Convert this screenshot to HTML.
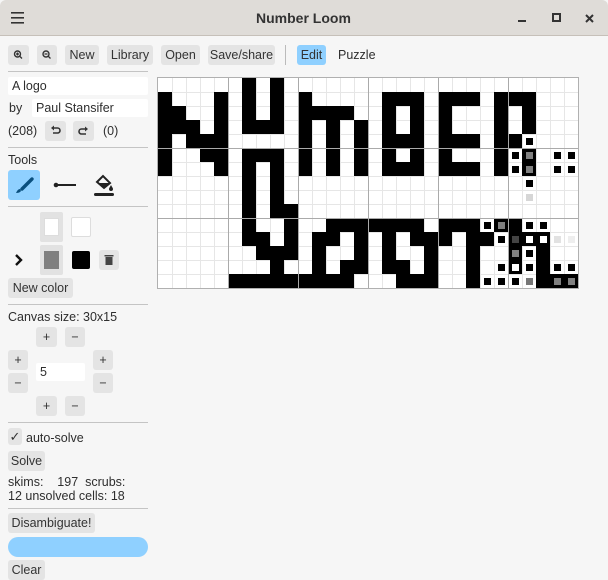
<!DOCTYPE html>
<html><head><meta charset="utf-8">
<style>
*{box-sizing:border-box;margin:0;padding:0}
body{width:608px;height:580px;overflow:hidden;background:#f6f6f6;font-family:"Liberation Sans","DejaVu Sans",sans-serif;font-size:12.5px;color:#2e2e2e;position:relative}
.a{position:absolute}
.tb{left:0;top:0;width:608px;height:36px;background:#dfdcd8;border-bottom:1px solid #c6c0b9;border-radius:6px 6px 0 0}
.btn{position:absolute;background:#e4e4e4;border-radius:3px;height:20px;line-height:20px;text-align:center;font-size:12.5px;color:#333}
.hr{position:absolute;left:8px;width:140px;height:1px;background:#c4c4c4}
.inp{position:absolute;background:#fff;height:18px;line-height:18px;padding-left:4px;border-radius:2px}
.t{position:absolute;white-space:nowrap}
</style></head><body>
<div class="a tb"></div>
<svg class="a" style="left:10px;top:11px" width="16" height="14"><rect x="1" y="1" width="13" height="1.6" fill="#333"/><rect x="1" y="6" width="13" height="1.6" fill="#333"/><rect x="1" y="11" width="13" height="1.6" fill="#333"/></svg>
<div class="t" style="left:256px;top:10px;font-weight:bold;font-size:14px;color:#333">Number Loom</div>
<svg class="a" style="left:515px;top:12px" width="60" height="14"><rect x="3" y="8" width="8" height="2" fill="#333"/><rect x="38" y="2" width="7" height="7" fill="none" stroke="#333" stroke-width="2"/></svg>
<svg class="a" style="left:584px;top:13px" width="12" height="12"><path d="M2 2L9 9M9 2L2 9" stroke="#333" stroke-width="2"/></svg>

<div class="btn" style="left:8px;top:45px;width:21px"><svg width="21" height="20"><circle cx="9.5" cy="9" r="3" fill="none" stroke="#333" stroke-width="1.4"/><path d="M8 9h3M9.5 7.5v3M11.5 11l2.5 2.5" stroke="#333" stroke-width="1.3"/></svg></div>
<div class="btn" style="left:37px;top:45px;width:20px"><svg width="20" height="20"><circle cx="9" cy="9" r="3" fill="none" stroke="#333" stroke-width="1.4"/><path d="M7.5 9h3M11 11l2.5 2.5" stroke="#333" stroke-width="1.3"/></svg></div>
<div class="btn" style="left:65px;top:45px;width:34px">New</div>
<div class="btn" style="left:107px;top:45px;width:46px">Library</div>
<div class="btn" style="left:161px;top:45px;width:39px">Open</div>
<div class="btn" style="left:208px;top:45px;width:67px">Save/share</div>
<div class="a" style="left:285px;top:45px;width:1px;height:20px;background:#bbb"></div>
<div class="btn" style="left:297px;top:45px;width:29px;background:#8fd0ff">Edit</div>
<div class="t" style="left:338px;top:48px">Puzzle</div>

<div class="hr" style="top:71px"></div>
<div class="inp" style="left:8px;top:77px;width:140px">A logo</div>
<div class="t" style="left:9px;top:101px">by</div>
<div class="inp" style="left:32px;top:99px;width:116px">Paul Stansifer</div>
<div class="t" style="left:8px;top:124px">(208)</div>
<div class="btn" style="left:45px;top:121px;width:21px"><svg width="21" height="20"><path d="M8 7h4.5a2.5 2.5 0 0 1 0 5H8" fill="none" stroke="#333" stroke-width="1.6"/><path d="M6 7l3-2.5v5z" fill="#333"/></svg></div>
<div class="btn" style="left:73px;top:121px;width:21px"><svg width="21" height="20"><path d="M13 8H8.5a2.5 2.5 0 0 0 0 5H13" fill="none" stroke="#333" stroke-width="1.6"/><path d="M15 8l-3-2.5v5z" fill="#333"/></svg></div>
<div class="t" style="left:103px;top:124px">(0)</div>
<div class="hr" style="top:147px"></div>

<div class="t" style="left:8px;top:153px">Tools</div>
<div class="a" style="left:8px;top:170px;width:32px;height:30px;background:#8fd0ff;border-radius:3px"></div>
<svg class="a" style="left:8px;top:170px" width="32" height="30"><path d="M14 19L24 9" stroke="#0a4f7e" stroke-width="3.4" stroke-linecap="round"/><path d="M12 19c-2 0-3 2-4 4 2 0 4-.5 5-2z" fill="#0a4f7e"/></svg>
<svg class="a" style="left:52px;top:176px" width="26" height="18"><circle cx="4" cy="9" r="2.3" fill="#222"/><rect x="4" y="8" width="20" height="2" fill="#222"/></svg>
<svg class="a" style="left:92px;top:172px" width="24" height="27"><path d="M5 10l6-6 7 7-6 5z" fill="none" stroke="#222" stroke-width="2"/><path d="M6 11h11l-5 5z" fill="#222"/><path d="M19 13c1 2 2 3 2 4a2 2 0 0 1-4 0c0-1 1-2 2-4z" fill="#222"/><rect x="2" y="21" width="20" height="3" rx="1.5" fill="#222"/></svg>
<div class="hr" style="top:206px"></div>

<div class="a" style="left:40px;top:212px;width:23px;height:30px;background:#e2e2e2;border-radius:2px"></div>
<div class="a" style="left:44px;top:218px;width:15px;height:18px;background:#fff;border:1px solid #ddd"></div>
<div class="a" style="left:71px;top:217px;width:20px;height:20px;background:#fff;border:1px solid #ddd;border-radius:2px"></div>
<svg class="a" style="left:14px;top:253px" width="10" height="14"><path d="M2 2l5 5-5 5" fill="none" stroke="#111" stroke-width="2.4"/></svg>
<div class="a" style="left:40px;top:245px;width:23px;height:30px;background:#e2e2e2;border-radius:2px"></div>
<div class="a" style="left:44px;top:251px;width:15px;height:18px;background:#808080"></div>
<div class="a" style="left:72px;top:251px;width:18px;height:18px;background:#000;border-radius:2px"></div>
<div class="btn" style="left:99px;top:250px;width:20px"><svg width="20" height="20"><rect x="6.5" y="7" width="7" height="8" fill="#444"/><rect x="5.5" y="5" width="9" height="1.5" fill="#444"/></svg></div>
<div class="btn" style="left:8px;top:278px;width:65px">New color</div>
<div class="hr" style="top:304px"></div>

<div class="t" style="left:8px;top:310px">Canvas size: 30x15</div>
<div class="btn" style="left:36px;top:327px;width:21px">+</div>
<div class="btn" style="left:65px;top:327px;width:20px">−</div>
<div class="btn" style="left:8px;top:350px;width:20px">+</div>
<div class="btn" style="left:8px;top:373px;width:20px">−</div>
<div class="inp" style="left:36px;top:363px;width:49px">5</div>
<div class="btn" style="left:93px;top:350px;width:20px">+</div>
<div class="btn" style="left:93px;top:373px;width:20px">−</div>
<div class="btn" style="left:36px;top:396px;width:21px">+</div>
<div class="btn" style="left:65px;top:396px;width:20px">−</div>
<div class="hr" style="top:422px"></div>

<div class="btn" style="left:8px;top:428px;width:14px;height:17px;line-height:17px;font-size:13px">✓</div>
<div class="t" style="left:26px;top:431px">auto-solve</div>
<div class="btn" style="left:8px;top:451px;width:37px">Solve</div>
<div class="t" style="left:8px;top:475px">skims:&nbsp;&nbsp;&nbsp; 197&nbsp; scrubs:</div>
<div class="t" style="left:8px;top:489px">12 unsolved cells: 18</div>
<div class="hr" style="top:508px"></div>
<div class="btn" style="left:8px;top:513px;width:87px">Disambiguate!</div>
<div class="a" style="left:8px;top:537px;width:140px;height:20px;background:#8fd0ff;border-radius:10px"></div>
<div class="btn" style="left:8px;top:560px;width:37px">Clear</div>

<svg id="g" class="a" style="left:157px;top:77px" width="422" height="212"></svg>
<script>
var R=[
"......X.X....................."+"",
"X...X.X.X.X.....XXX.XXX.XXX...",
"XX..X.X.X.XXXX..X.X.X...X.X...",
"XXX.X.XXX.X.X.X.X.X.X...X.X...",
"X.XXX.....X.X.X.XXX.XXX.XXd...",
"X..XX.XXX.X.X.X.X.X.X...Xdg.dd",
"X...X.X.X.X.X.X.XXX.XXX.Xdg.dd",
"......X.X.................d...",
"......X.X.................l...",
"......X.XX....................",
"......X..X"+"..XXXXXXX."+"XXXdgXdd..",
"......XX.X"+".XX.X.X.XX"+"X.XXdhwwmn",
".......XXX"+".X..X.X..X"+"..X..gdX..",
"........X."+".X.XX.XX.X"+"..X.dwdXdd",
".....XXXXX"+"XXXX...XXX"+"..XdddGXgg"];
var s='<rect x="0" y="0" width="422" height="212" fill="#fff"/>';
for(var i=1;i<30;i++){if(i%5)s+='<rect x="'+(1+i*14)+'" y="1" width="1" height="210" fill="#e6e6e6"/>';}
for(var j=1;j<15;j++){if(j%5)s+='<rect x="1" y="'+(1+j*14)+'" width="420" height="1" fill="#e6e6e6"/>';}
var inner={g:'#808080',h:'#444',w:'#fff'},dot={d:'#000',l:'#d6d6d6',m:'#e2e2e2',n:'#eeeeee',G:'#777'};
for(var r=0;r<15;r++)for(var c=0;c<30;c++){var ch=R[r][c],x=1+c*14,y=1+r*14;
if(ch=='X'||inner[ch]){s+='<rect x="'+x+'" y="'+y+'" width="14" height="14" fill="#000"/>';
if(inner[ch])s+='<rect x="'+(x+4)+'" y="'+(y+4)+'" width="7" height="7" fill="'+inner[ch]+'"/>';}
else if(dot[ch])s+='<rect x="'+(x+4)+'" y="'+(y+4)+'" width="7" height="7" fill="'+dot[ch]+'"/>';}
for(var i=5;i<30;i+=5)s+='<rect x="'+(1+i*14)+'" y="1" width="1" height="210" fill="#aaa"/>';
for(var j=5;j<15;j+=5)s+='<rect x="1" y="'+(1+j*14)+'" width="420" height="1" fill="#aaa"/>';
s+='<rect x="0.5" y="0.5" width="421" height="211" fill="none" stroke="#b0b0b0"/>';
document.getElementById('g').innerHTML=s;
</script>
</body></html>
